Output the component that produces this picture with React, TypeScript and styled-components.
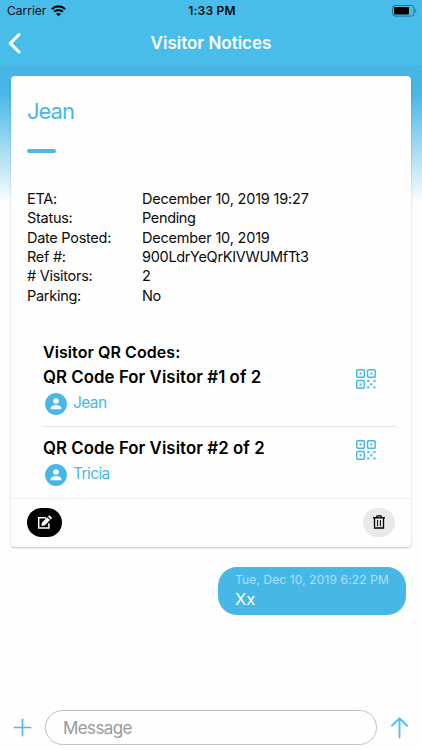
import React from 'react';
import styled, { createGlobalStyle } from 'styled-components';

const Global = createGlobalStyle`
  * { box-sizing: border-box; }
  body { margin: 0; background: #fefefe; font-family: Inter, "Liberation Sans", sans-serif; color: #0c0c0c; }
  svg { display: block; flex: none; }
`;

const BLUE = '#47b8e6';

const Screen = styled.div`
  width: 422px;
  height: 750px;
  display: flex;
  flex-direction: column;
  overflow: hidden;
  background: #fefefe;
`;
const Header = styled.header`
  flex: none;
  height: 65px;
  background: #49bdea;
`;
const StatusBar = styled.div`
  height: 22px;
  padding: 0 5px 0 7px;
  display: grid;
  grid-template-columns: 1fr auto 1fr;
  align-items: center;
`;
const Carrier = styled.div`
  display: flex;
  align-items: center;
  gap: 5px;
  font-size: 12px;
  line-height: 22px;
`;
const Clock = styled.div`
  font-size: 12px;
  font-weight: 600;
  line-height: 22px;
  letter-spacing: 0.2px;
`;
const BatteryBox = styled.div`
  display: flex;
  justify-content: flex-end;
`;
const NavBar = styled.div`
  height: 43px;
  padding: 0 8px;
  display: grid;
  grid-template-columns: 14px 1fr 14px;
  align-items: center;
`;
const NavTitle = styled.h1`
  margin: 0 0 2px;
  text-align: center;
  color: #fff;
  font-size: 17px;
  font-weight: 570;
  line-height: 40px;
`;
const Content = styled.main`
  flex: 1;
  padding: 11px 11px 0;
  display: flex;
  flex-direction: column;
  background: linear-gradient(#47b6e6 0, #47b7e6 28px, #fefefe 138px);
`;
const Card = styled.section`
  height: 471px;
  display: flex;
  flex-direction: column;
  background: #fefefe;
  border-radius: 4px;
  box-shadow: 0 1px 2px rgba(0, 0, 0, 0.22), 0 0 1px rgba(0, 0, 0, 0.1);
`;
const CardBody = styled.div`
  height: 423px;
  padding: 20px 15px 0 16px;
  border-bottom: 1px solid #f0f0f0;
`;
const Name = styled.h2`
  margin: 0;
  color: ${BLUE};
  font-size: 22px;
  font-weight: 380;
  line-height: 30px;
  letter-spacing: -1px;
`;
const Accent = styled.div`
  width: 29px;
  height: 4px;
  margin-top: 23px;
  border-radius: 2px;
  background: #4fb8df;
`;
const Details = styled.dl`
  margin: 36px 0 0;
  display: grid;
  grid-template-columns: 115px 1fr;
  grid-auto-rows: 19.35px;
  font-size: 14.5px;
  line-height: 19.35px;
`;
const Term = styled.dt`
  margin: 0;
  letter-spacing: -0.28px;
`;
const Value = styled.dd<{ $spacing?: number }>`
  margin: 0;
  letter-spacing: ${(p) => p.$spacing ?? -0.2}px;
`;
const Codes = styled.div`
  margin: 37px 0 0 16px;
`;
const CodesTitle = styled.h3<{ $large?: boolean }>`
  margin: 0;
  font-size: ${(p) => (p.$large ? 16.8 : 16)}px;
  font-weight: 570;
  line-height: 20px;
  letter-spacing: 0.07px;
  color: #000;
`;
const CodeRow = styled.div<{ $divided?: boolean }>`
  height: ${(p) => (p.$divided ? 65 : 72)}px;
  padding: ${(p) => (p.$divided ? 5 : 11)}px 20px 0 0;
  display: flex;
  justify-content: space-between;
  border-bottom: ${(p) => (p.$divided ? '1px solid #e6e6e6' : '0')};
`;
const Guest = styled.div`
  display: flex;
  align-items: center;
  gap: 6px;
  padding-left: 2px;
  margin-top: 5px;
  height: 24px;
  color: ${BLUE};
  font-size: 15.5px;
  letter-spacing: -0.6px;
`;
const GuestName = styled.span`
  line-height: 20px;
  margin-top: -2px;
`;
const QrButton = styled.div`
  padding-top: 2px;
`;
const CardActions = styled.div`
  flex: 1;
  display: flex;
  align-items: flex-start;
  justify-content: space-between;
  padding: 9px 16px 0;
`;
const Pill = styled.button<{ $dark?: boolean }>`
  width: ${(p) => (p.$dark ? 35 : 32)}px;
  height: 29px;
  padding: 0 0 1px;
  border: 0;
  border-radius: 15px;
  display: flex;
  align-items: center;
  justify-content: center;
  color: ${(p) => (p.$dark ? '#fff' : '#000')};
  background: ${(p) => (p.$dark ? '#000' : '#e9e9e9')};
`;
const Bubble = styled.div`
  align-self: flex-end;
  width: 188px;
  height: 48px;
  margin: 20px 5px 0 0;
  padding: 4px 17px;
  border-radius: 19px;
  background: ${BLUE};
  color: #fff;
`;
const Stamp = styled.div`
  font-size: 12px;
  line-height: 18px;
  letter-spacing: 0.13px;
  color: #abe0f7;
  white-space: nowrap;
`;
const Message = styled.div`
  font-size: 16.5px;
  line-height: 21px;
`;
const Composer = styled.footer`
  flex: none;
  height: 40px;
  padding: 0 12px 0 13px;
  display: flex;
  align-items: flex-start;
`;
const Field = styled.div`
  width: 332px;
  height: 35px;
  margin: 0 14px 0 13px;
  padding-left: 17px;
  border: 1px solid #c2c2c2;
  border-radius: 18px;
  color: #999;
  font-size: 17px;
  line-height: 34px;
  letter-spacing: -0.6px;
`;
const ComposerIcon = styled.div`
  padding-top: 7px;
`;

const Wifi = () => (
  <svg width="15" height="12" viewBox="0 0 15 12" fill="none" stroke="#000" strokeWidth="2.2">
    <path d="M.8 4.2C4.6.5 10.4.5 14.2 4.2M3.2 6.8C5.7 4.5 9.3 4.5 11.8 6.8" />
    <path d="M7.5 11.3 5.1 8.8a3.5 3.5 0 0 1 4.8 0Z" fill="#000" stroke="none" />
  </svg>
);
const Battery = () => (
  <svg width="25" height="12" viewBox="0 0 25 12">
    <rect x=".5" y=".5" width="21.5" height="10.6" rx="2.6" fill="none" stroke="#287087" />
    <rect x="2" y="2" width="15" height="7.5" rx="1" />
    <path d="M23.2 4v3.7c1.6-.5 1.6-3.2 0-3.7Z" fill="#287087" />
  </svg>
);
const Back = () => (
  <svg width="14" height="22" viewBox="0 0 14 22" fill="none" stroke="#fff" strokeWidth="3.1" strokeLinecap="round" strokeLinejoin="round">
    <path d="M11 1.6 2.3 10.4 11 19" />
  </svg>
);
const Person = () => (
  <svg width="22" height="22" viewBox="0 0 22 22">
    <circle cx="11" cy="11" r="10.9" fill={BLUE} />
    <circle cx="11" cy="8" r="2.8" fill="#fff" />
    <path d="M5.7 16.2v-1.1c0-1.9 3.2-3 5.3-3s5.3 1.1 5.3 3v1.1Z" fill="#fff" />
  </svg>
);
const Qr = () => (
  <svg width="20" height="20" viewBox="0 0 20 20" fill={BLUE}>
    {[[0, 0], [10.8, 0], [0, 10.8]].map(([x, y]) => (
      <g key={`${x}-${y}`}>
        <rect x={x + 0.75} y={y + 0.75} width="7.6" height="7.6" rx="1" fill="none" stroke={BLUE} strokeWidth="1.5" />
        <rect x={x + 3.55} y={y + 3.55} width="2" height="2" />
      </g>
    ))}
    {[[11.2, 11], [17.4, 11], [14.3, 14.2], [11.2, 17.4], [17.4, 17.4]].map(([x, y]) => (
      <rect key={`${x}-${y}`} x={x} y={y} width="2.1" height="2.1" />
    ))}
  </svg>
);
const Edit = () => (
  <svg width="16" height="15" viewBox="0 0 16 15">
    <path d="M9 2.7H1.7v10.4h10.2V8.2" fill="none" stroke="#fff" strokeWidth="1.5" />
    <path d="m4.3 10.8.7-3.2 5.3-5.3 2.8 2.8-5.5 5.3ZM11 1.5l.7-.7c.4-.4.9-.4 1.3 0l1.7 1.7c.3.3.3.9 0 1.2l-.8.8Z" fill="#fff" />
  </svg>
);
const Trash = () => (
  <svg width="12" height="14" viewBox="0 0 12 14" fill="none" stroke="#000">
    <path d="M0 2.8h12" strokeWidth="1.4" />
    <path d="M3.4 2.5 4.2.8h3.6l.8 1.7M1.5 3v10h9V3" strokeWidth="1.3" />
    <path d="M4.6 5v6.2M7.4 5v6.2" strokeWidth="1" />
  </svg>
);
const Plus = () => (
  <svg width="19" height="20" viewBox="0 0 19 20" stroke="#50b9e6" strokeWidth="1.7" strokeLinecap="round">
    <path d="M1.4 10.5h16.2M9.5 2.3v16.4" />
  </svg>
);
const Send = () => (
  <svg width="18" height="22" viewBox="0 0 18 22" fill="none" stroke="#5abdeb" strokeWidth="1.9" strokeLinecap="round" strokeLinejoin="round">
    <path d="M8.5 20.2V1.2M.9 8.7 8.5 1.2l7.6 7.5" />
  </svg>
);

const details: [string, string, number?][] = [
  ['ETA:', 'December 10, 2019 19:27'],
  ['Status:', 'Pending', -0.35],
  ['Date Posted:', 'December 10, 2019'],
  ['Ref #:', '900LdrYeQrKIVWUMfTt3', -0.3],
  ['# Visitors:', '2'],
  ['Parking:', 'No', -0.4],
];
const visitors = ['Jean', 'Tricia'];

export default function App() {
  return (
    <Screen>
      <Global />
      <Header>
        <StatusBar>
          <Carrier><span>Carrier</span><Wifi /></Carrier>
          <Clock>1:33 PM</Clock>
          <BatteryBox><Battery /></BatteryBox>
        </StatusBar>
        <NavBar>
          <Back />
          <NavTitle>Visitor Notices</NavTitle>
        </NavBar>
      </Header>
      <Content>
        <Card>
          <CardBody>
            <Name>Jean</Name>
            <Accent />
            <Details>
              {details.map(([term, value, spacing]) => (
                <React.Fragment key={term}>
                  <Term>{term}</Term>
                  <Value $spacing={spacing}>{value}</Value>
                </React.Fragment>
              ))}
            </Details>
            <Codes>
              <CodesTitle>Visitor QR Codes:</CodesTitle>
              {visitors.map((name, i) => (
                <CodeRow key={name} $divided={i === 0}>
                  <div>
                    <CodesTitle $large>{`QR Code For Visitor #${i + 1} of ${visitors.length}`}</CodesTitle>
                    <Guest><Person /><GuestName>{name}</GuestName></Guest>
                  </div>
                  <QrButton><Qr /></QrButton>
                </CodeRow>
              ))}
            </Codes>
          </CardBody>
          <CardActions>
            <Pill $dark aria-label="Edit"><Edit /></Pill>
            <Pill aria-label="Delete"><Trash /></Pill>
          </CardActions>
        </Card>
        <Bubble>
          <Stamp>Tue, Dec 10, 2019 6:22 PM</Stamp>
          <Message>Xx</Message>
        </Bubble>
      </Content>
      <Composer>
        <ComposerIcon><Plus /></ComposerIcon>
        <Field>Message</Field>
        <ComposerIcon><Send /></ComposerIcon>
      </Composer>
    </Screen>
  );
}
